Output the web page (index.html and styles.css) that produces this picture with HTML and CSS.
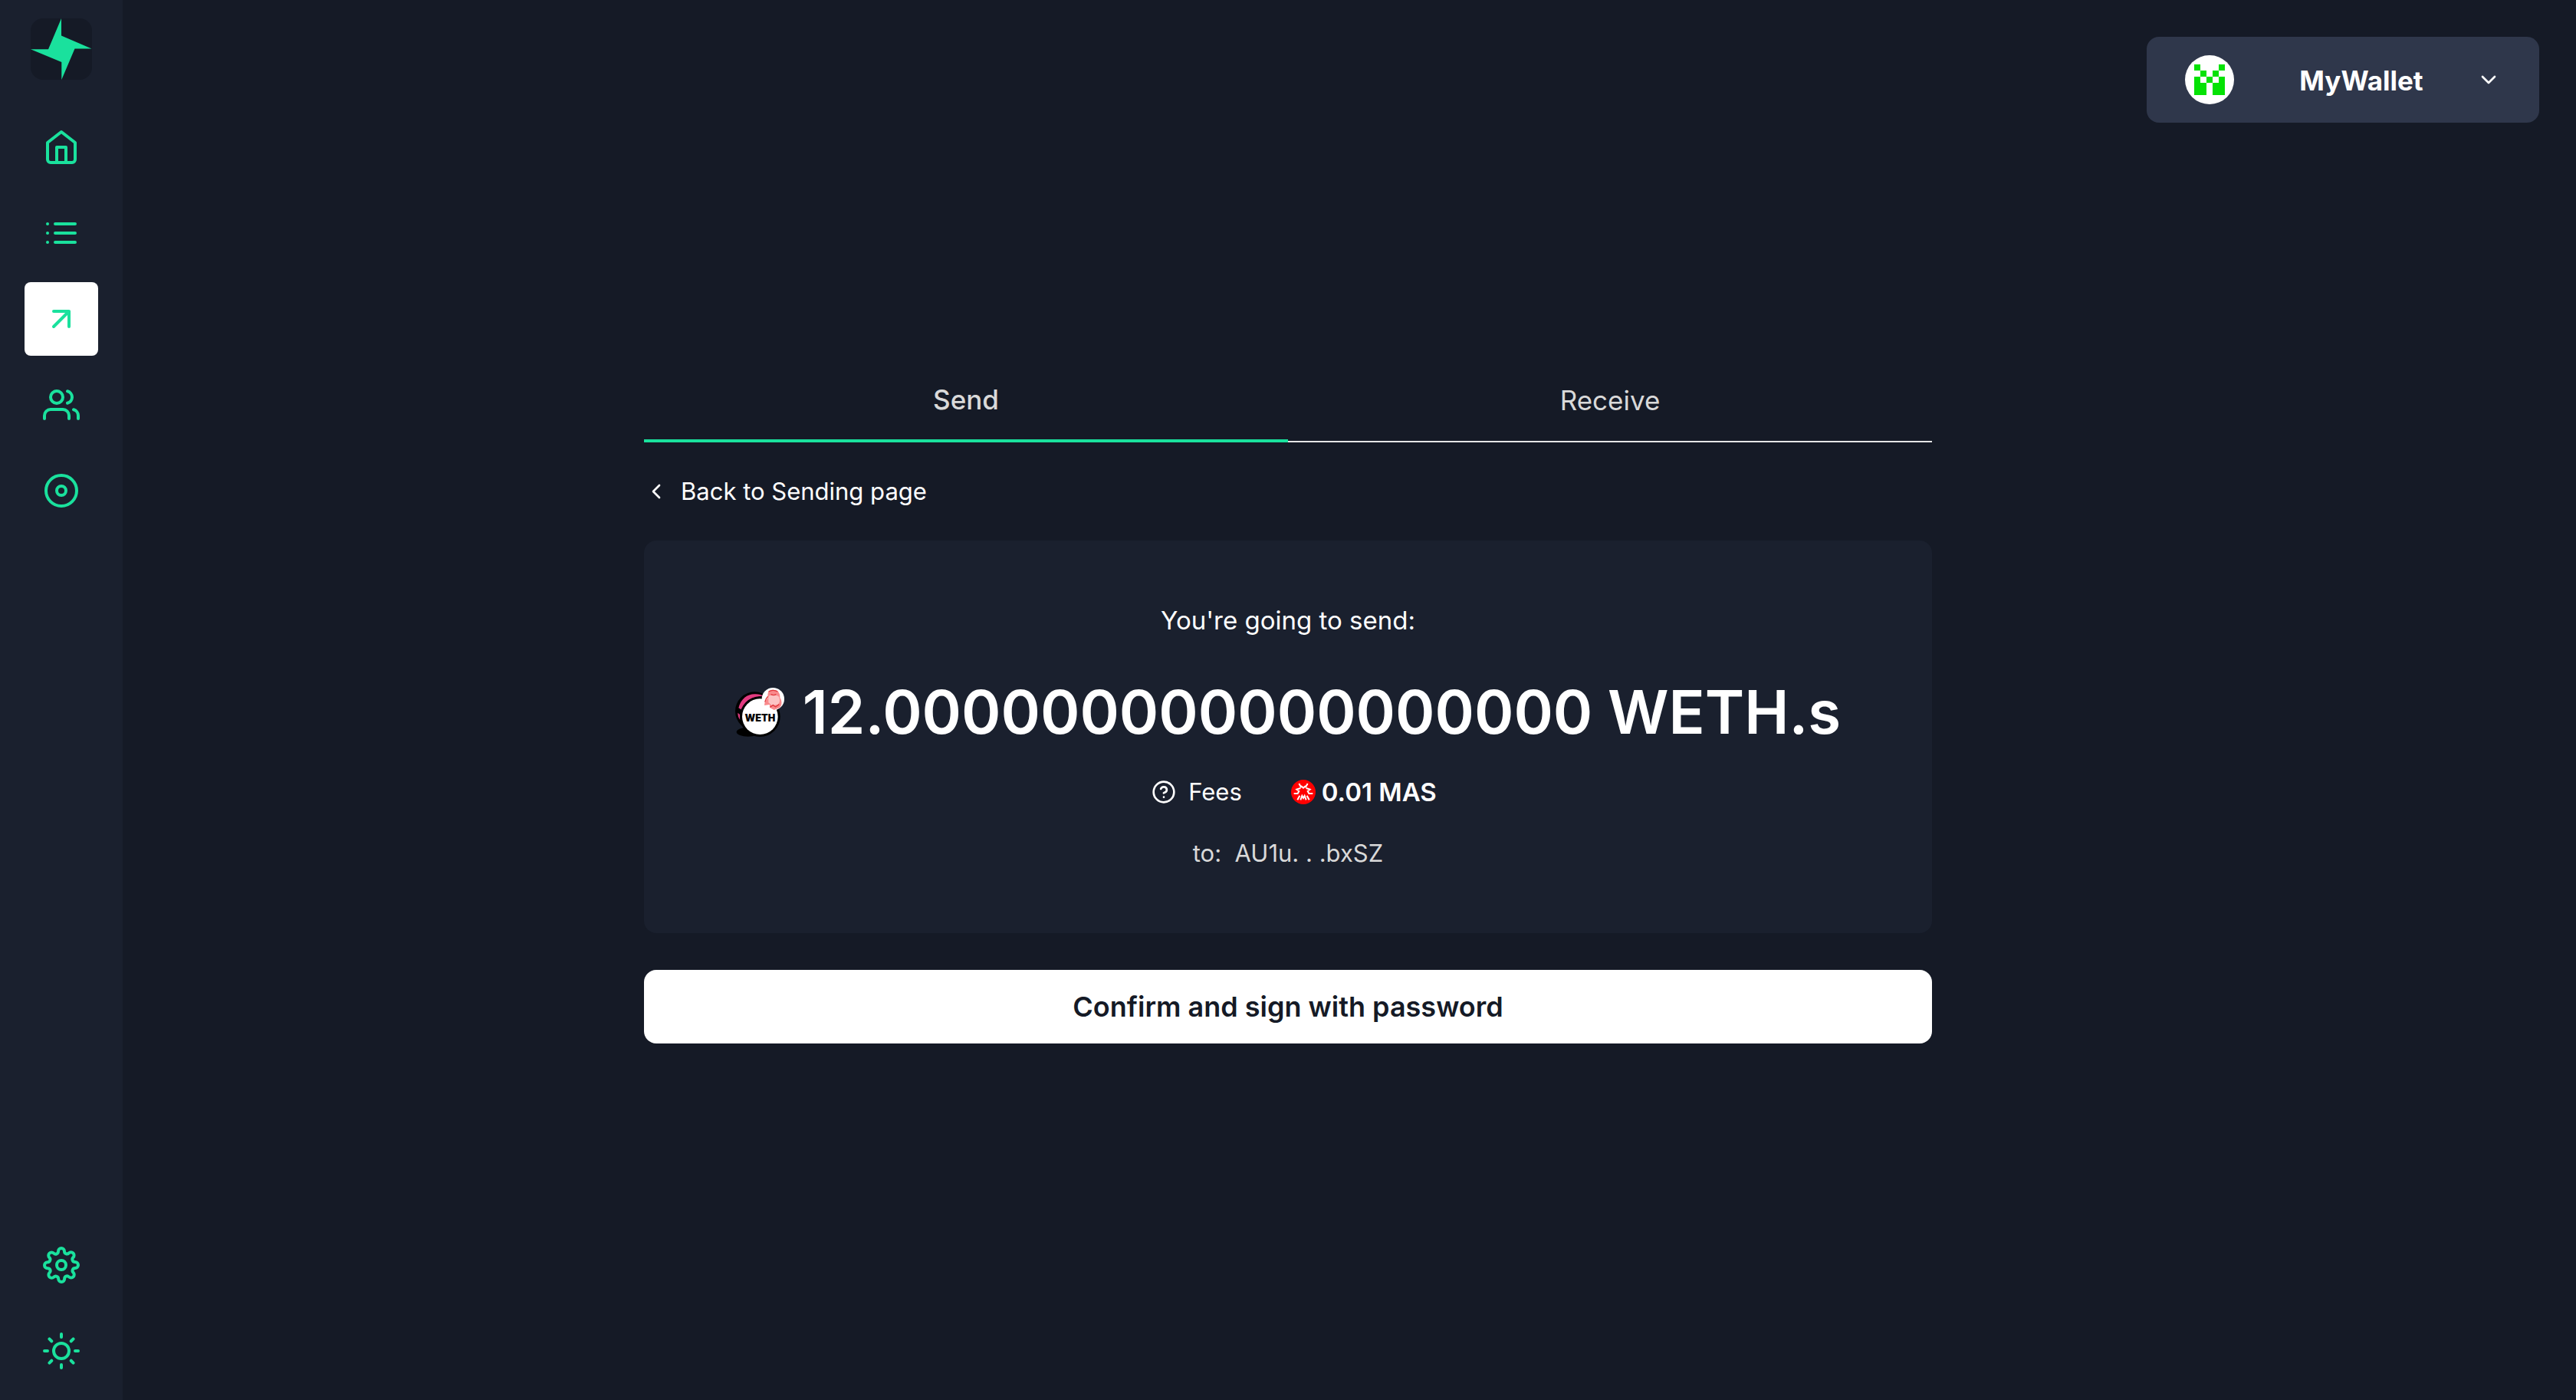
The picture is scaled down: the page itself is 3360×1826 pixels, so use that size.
FILE: index.html
```html
<!DOCTYPE html>
<html lang="en">
<head>
<meta charset="utf-8">
<meta name="viewport" content="width=device-width, initial-scale=1">
<title>Send</title>
<link rel="stylesheet" href="styles.css">
</head>
<body class="app">
<aside class="sidebar">
  <a class="logo" href="#" aria-label="Station">
    <svg viewBox="0 0 80 80"><rect class="logo-tile" width="80" height="80" rx="16"/><path class="logo-star" d="M40 0V22.500L79.500 39.500H57.500L40.300 80V57L0 40.300H23z"/></svg>
  </a>
  <nav class="nav">
    <a class="nav-item" href="#" aria-label="Home"><svg class="icon" viewBox="0 0 24 24"><path d="M3 9l9-7 9 7v11a2 2 0 0 1-2 2H5a2 2 0 0 1-2-2z"/><path d="M9 22V12h6v10"/></svg></a>
    <a class="nav-item" href="#" aria-label="Transactions"><svg class="icon" viewBox="0 0 24 24"><path d="M8 6h13M8 12h13M8 18h13M3 6h.01M3 12h.01M3 18h.01"/></svg></a>
    <a class="nav-item nav-item-active" href="#" aria-label="Send and receive"><svg class="icon" viewBox="0 0 24 24"><path d="M7 17L17 7M7 7h10v10"/></svg></a>
    <a class="nav-item" href="#" aria-label="Contacts"><svg class="icon" viewBox="0 0 24 24"><path d="M17 21v-2a4 4 0 0 0-4-4H5a4 4 0 0 0-4 4v2"/><circle cx="9" cy="7" r="4"/><path d="M23 21v-2a4 4 0 0 0-3-3.870M16 3.130a4 4 0 0 1 0 7.750"/></svg></a>
    <a class="nav-item" href="#" aria-label="Assets"><svg class="icon" viewBox="0 0 24 24"><circle cx="12" cy="12" r="10"/><circle cx="12" cy="12" r="3"/></svg></a>
  </nav>
  <div class="nav nav-bottom">
    <a class="nav-item" href="#" aria-label="Settings"><svg class="icon" viewBox="0 0 24 24"><circle cx="12" cy="12" r="3"/><path d="M19.400 15a1.650 1.650 0 0 0 .33 1.820l.06.06a2 2 0 0 1 0 2.830 2 2 0 0 1-2.830 0l-.06-.06a1.650 1.650 0 0 0-1.820-.33 1.650 1.650 0 0 0-1 1.510V21a2 2 0 0 1-2 2 2 2 0 0 1-2-2v-.09A1.650 1.650 0 0 0 9 19.400a1.650 1.650 0 0 0-1.820.33l-.06.06a2 2 0 0 1-2.830 0 2 2 0 0 1 0-2.830l.06-.06a1.650 1.650 0 0 0 .33-1.820 1.650 1.650 0 0 0-1.510-1H3a2 2 0 0 1-2-2 2 2 0 0 1 2-2h.09A1.650 1.650 0 0 0 4.600 9a1.650 1.650 0 0 0-.33-1.820l-.06-.06a2 2 0 0 1 0-2.830 2 2 0 0 1 2.830 0l.06.06a1.650 1.650 0 0 0 1.820.33H9a1.650 1.650 0 0 0 1-1.510V3a2 2 0 0 1 2-2 2 2 0 0 1 2 2v.09a1.650 1.650 0 0 0 1 1.510 1.650 1.650 0 0 0 1.820-.33l.06-.06a2 2 0 0 1 2.830 0 2 2 0 0 1 0 2.830l-.06.06a1.650 1.650 0 0 0-.33 1.820V9a1.650 1.650 0 0 0 1.510 1H21a2 2 0 0 1 2 2 2 2 0 0 1-2 2h-.09a1.650 1.650 0 0 0-1.510 1z"/></svg></a>
    <button class="nav-item" type="button" aria-label="Light theme"><svg class="icon" viewBox="0 0 24 24"><circle cx="12" cy="12" r="5"/><path d="M12 1v2M12 21v2M4.220 4.220l1.420 1.420M18.360 18.360l1.420 1.420M1 12h2M21 12h2M4.220 19.780l1.420-1.420M18.360 5.640l1.420-1.420"/></svg></button>
  </div>
</aside>

<header class="topbar">
  <button class="account" type="button">
    <svg class="avatar" viewBox="0 0 64 64"><circle cx="32" cy="32" r="32" fill="#fff"/><path fill="#05e205" shape-rendering="crispEdges" d="M12 12h8v8h-8zM44 12h8v8h-8zM20 20h8v8h-8zM36 20h8v8h-8zM28 28h8v8h-8zM12 28h8v8h8v16H12zM44 28h8v24H36V36h8z"/></svg>
    <span class="account-name">MyWallet</span>
    <svg class="icon icon-small" viewBox="0 0 24 24"><path d="M6 9l6 6 6-6"/></svg>
  </button>
</header>

<main class="page">
  <div class="tabs" role="tablist">
    <button class="tab tab-active" type="button" role="tab" aria-selected="true">Send</button>
    <button class="tab" type="button" role="tab" aria-selected="false">Receive</button>
  </div>
  <a class="back" href="#"><svg class="icon icon-small" viewBox="0 0 24 24"><path d="M15 18l-6-6 6-6"/></svg>Back to Sending page</a>
  <section class="card">
    <p class="lead">You're going to send:</p>
    <div class="amount">
      <svg class="token" viewBox="0 0 192 192">
        <ellipse cx="50" cy="173" rx="45" ry="18"/>
        <circle cx="76" cy="92" r="76"/>
        <path fill="#e23a80" d="M13 79C22 42 50 23 80 25C94 25 104 28 112 34C66 33 38 54 27 88zM10 98l9 8v20c-6-8-9-16-9-28z"/>
        <path d="M8 84l22 16-3 10L6 92z"/>
        <circle cx="97" cy="113" r="79"/>
        <circle cx="97" cy="113" r="70" fill="#fff"/>
        <circle cx="148" cy="44" r="44" fill="#fff"/>
        <path fill="#f98a8c" d="M130 14c8-8 30-8 38 1 6 8 8 16 7 24 6 8 8 18 5 30l-6 9-22 9-16-9-2-12-20 3c0-12 6-22 13-28 0-10 0-20 3-27z"/>
        <path fill="#fcc4c4" d="M130 36c2-10 38-10 42 2 4 10 2 20-4 27l-24 5-14-12z"/>
        <path fill="none" stroke="#e0383c" stroke-width="4" d="M131 15q17-10 35 0M140 26q10 6 20 0M128 34q-8 8-12 22M136 76l12-8 10 7 14-10"/>
        <text class="token-label" x="97" y="131" text-anchor="middle">WETH</text>
      </svg>
      <span>12.000000000000000000 WETH.s</span>
    </div>
    <div class="fees">
      <span class="fee-label"><svg class="icon icon-small" viewBox="0 0 24 24"><circle cx="12" cy="12" r="10"/><path d="M9.090 9a3 3 0 0 1 5.830 1c0 2-3 3-3 3M12 17h.01"/></svg>Fees</span>
      <span class="fee-value"><svg class="coin" viewBox="0 0 96 96"><circle class="coin-disc" cx="48" cy="48" r="48"/><path d="M31 15l9 16M65 15l-9 16M39 24l9 8 9-8M11 54h15l5-9-9-7 15-5M85 54H70l-5-9 9-7-15-5M25 79l9-17M37 79l6-16 5 9 5-9 6 16M71 79l-9-17"/></svg>0.01 MAS</span>
    </div>
    <p class="recipient">to:&nbsp; AU1u. . .bxSZ</p>
  </section>
  <button class="confirm" type="button">Confirm and sign with password</button>
</main>
</body>
</html>
```
FILE: styles.css
```css
:root {
  --bg: #151a26;
  --surface: #1a202e;
  --raised: #2f374b;
  --brand: #1ae19d;
  --text: #fff;
  --muted: #d9d9d9;
}

* {
  box-sizing: border-box;
}

.app {
  margin: 0;
  min-height: 100vh;
  display: grid;
  background: var(--bg);
  color: var(--text);
  font: 400 31px/48px Inter, "Open Sans", sans-serif;
}

p {
  margin: 0;
}

a {
  color: inherit;
  text-decoration: none;
}

button {
  border: 0;
  padding: 0;
  background: none;
  color: inherit;
  font: inherit;
  cursor: pointer;
}

.icon {
  width: 48px;
  height: 48px;
  flex: none;
  fill: none;
  stroke: currentColor;
  stroke-width: 2;
  stroke-linecap: round;
  stroke-linejoin: round;
}

.icon-small {
  width: 32px;
  height: 32px;
}

/* Sidebar, top bar and page share one grid cell so the page centres on the window */
.sidebar,
.topbar,
.page {
  grid-area: 1 / 1;
}

.sidebar {
  z-index: 1;
  width: 160px;
  padding: 24px 0 16px;
  display: flex;
  flex-direction: column;
  align-items: center;
  gap: 40px;
  background: var(--surface);
  color: var(--brand);
}

.logo {
  width: 80px;
  height: 80px;
}

.logo svg {
  display: block;
}

.logo-tile {
  fill: var(--bg);
}

.logo-star {
  fill: var(--brand);
}

.nav {
  display: flex;
  flex-direction: column;
  gap: 16px;
}

.nav-bottom {
  margin-top: auto;
}

.nav-item {
  width: 96px;
  height: 96px;
  display: flex;
  align-items: center;
  justify-content: center;
  border-radius: 8px;
}

.nav-item-active {
  background: #fff;
}

.topbar {
  z-index: 1;
  justify-self: end;
  align-self: start;
  padding: 48px;
}

.account {
  width: 512px;
  height: 112px;
  padding: 0 50px;
  display: flex;
  align-items: center;
  border-radius: 16px;
  background: var(--raised);
  font-size: 35px;
  font-weight: 700;
}

.avatar {
  width: 64px;
  height: 64px;
  margin-right: 16px;
}

.account-name {
  flex: 1;
  padding-top: 2px;
}

.page {
  width: 50%;
  place-self: center;
  display: flex;
  flex-direction: column;
}

.tabs {
  display: flex;
}

.tab {
  flex: 1;
  height: 112px;
  padding-top: 4px;
  border-bottom: 2px solid #e6e6e6;
  color: var(--muted);
  font-size: 35px;
}

.tab-active {
  border-bottom: 4px solid var(--brand);
  font-weight: 500;
}

.back {
  align-self: flex-start;
  height: 128px;
  display: flex;
  align-items: center;
  gap: 16px;
}

.card {
  padding: 80px 48px;
  display: flex;
  flex-direction: column;
  align-items: center;
  gap: 32px;
  border-radius: 16px;
  background: var(--surface);
}

.lead {
  margin-bottom: 16px;
  font-size: 33px;
}

.amount {
  display: flex;
  align-items: center;
  gap: 24px;
  font-size: 78px;
  font-weight: 600;
  line-height: 96px;
  white-space: nowrap;
}

.token {
  width: 64px;
  height: 64px;
}

.token-label {
  font-size: 38px;
  font-weight: 900;
}

.fees {
  padding-left: 16px;
  display: flex;
  gap: 64px;
}

.fee-label,
.fee-value {
  display: flex;
  align-items: center;
  gap: 16px;
}

.fee-value {
  gap: 8px;
  font-size: 33px;
  font-weight: 600;
}

.coin {
  width: 32px;
  height: 32px;
  fill: none;
  stroke: #fff;
  stroke-width: 6;
}

.coin-disc {
  fill: #f00;
  stroke: none;
}

.recipient {
  color: var(--muted);
}

.confirm {
  height: 96px;
  margin-top: 48px;
  border-radius: 16px;
  background: #fff;
  color: var(--bg);
  font-size: 36px;
  font-weight: 600;
}
```
